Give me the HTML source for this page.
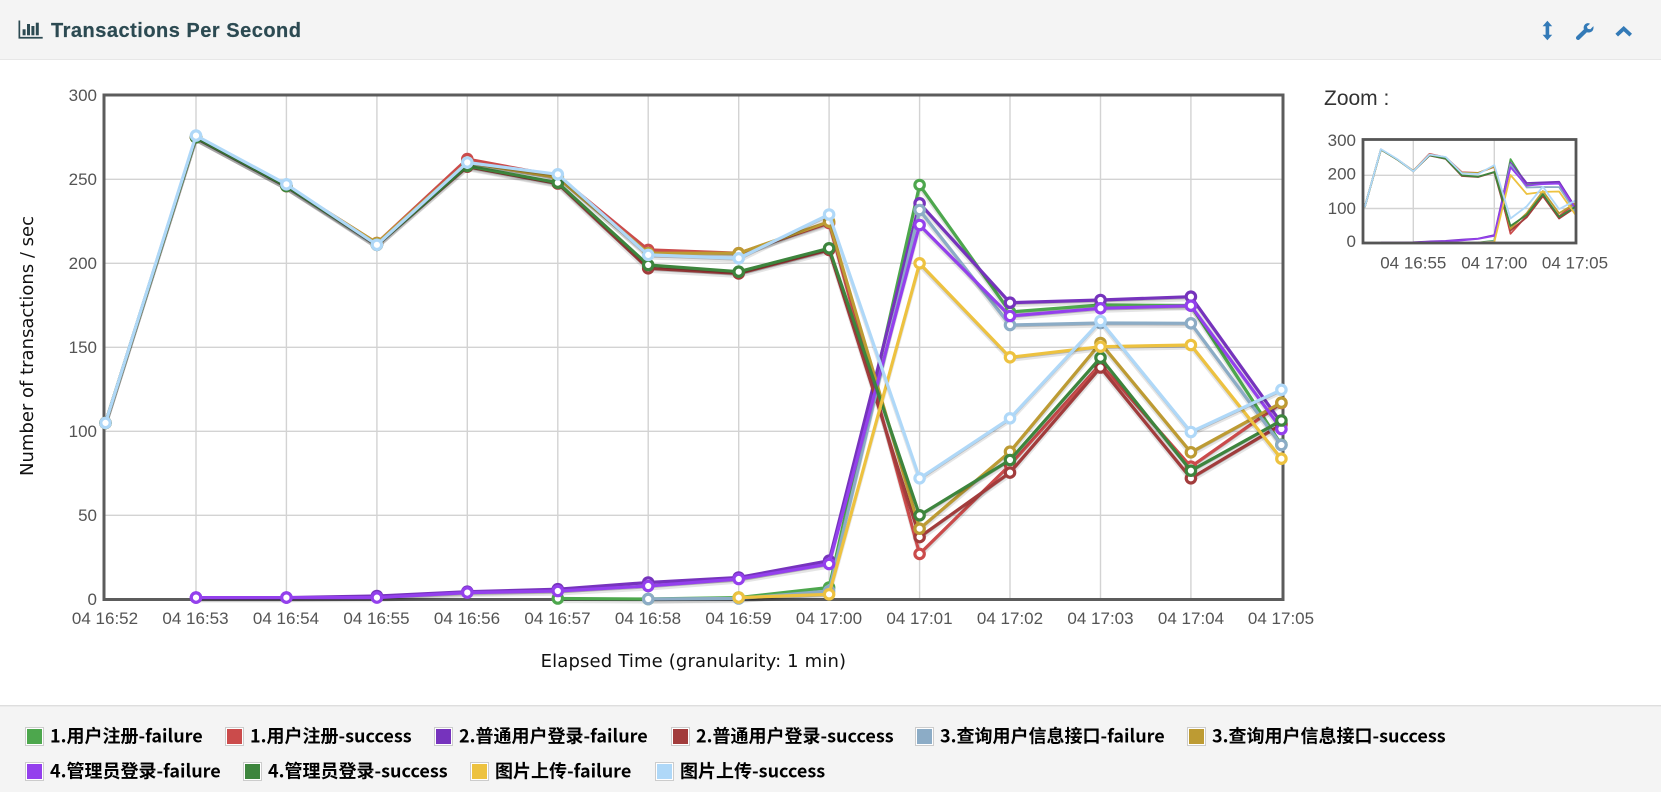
<!DOCTYPE html>
<html><head><meta charset="utf-8"><title>Transactions Per Second</title>
<style>
html,body{margin:0;padding:0;background:#fff;width:1661px;height:792px;overflow:hidden}
svg{position:absolute;left:0;top:0;display:block}
.t{font-family:"Liberation Sans",sans-serif;font-size:17px;fill:#545454}
.d{font-family:"DejaVu Sans",sans-serif;font-size:18px;fill:#111}
.l{font-family:"Noto Sans CJK SC",sans-serif;font-size:18px;font-weight:700;fill:#000}
.p{fill:none;stroke-linejoin:round;vector-effect:non-scaling-stroke}
.g{stroke:#d3d3d3;stroke-width:1.4;fill:none}
.m use{stroke-width:3.2}
.m use.s{stroke:rgba(0,0,0,.1);stroke-width:3.2}
.m use.r{stroke:rgba(0,0,0,.2);stroke-width:1.6}
.z use{stroke-width:1.8}
</style></head><body>
<svg width="1661" height="792" viewBox="0 0 1661 792" xmlns="http://www.w3.org/2000/svg">
<defs>
<polyline class="p" id="a1" points="557.8,598.5 648.2,599 738.7,597.6 829.1,587.5 919.6,185 1010,312 1100.5,305 1190.9,305.5 1281.4,444.7"/>
<polyline class="p" id="a2" points="105.5,422.9 196,137.3 286.4,186 376.9,243.1 467.3,159.1 557.8,176 648.2,249.9 738.7,253.2 829.1,223 919.6,553.9 1010,464.9 1100.5,364.1 1190.9,466.7 1281.4,403"/>
<polyline class="p" id="a3" points="196,597.6 286.4,597.6 376.9,596 467.3,591.7 557.8,589.2 648.2,582.5 738.7,577.5 829.1,560.7 919.6,203.3 1010,302.7 1100.5,300 1190.9,296.7 1281.4,423"/>
<polyline class="p" id="a4" points="105.5,422.9 196,137.3 286.4,186 376.9,244.8 467.3,166.7 557.8,183.5 648.2,268.3 738.7,273.4 829.1,249.9 919.6,537.1 1010,472.6 1100.5,367.5 1190.9,478.3 1281.4,424.6"/>
<polyline class="p" id="a5" points="648.2,599 738.7,598.5 829.1,591 919.6,210 1010,325 1100.5,323 1190.9,323.3 1281.4,445"/>
<polyline class="p" id="a6" points="105.5,422.9 196,137.3 286.4,186 376.9,243.1 467.3,162.5 557.8,177.6 648.2,253.2 738.7,253.2 829.1,221.7 919.6,528.7 1010,451.7 1100.5,343 1190.9,452.3 1281.4,402.7"/>
<polyline class="p" id="a7" points="196,597.6 286.4,597.6 376.9,597.6 467.3,592.6 557.8,591 648.2,586 738.7,579 829.1,564 919.6,225 1010,316 1100.5,308.3 1190.9,305.7 1281.4,429"/>
<polyline class="p" id="a8" points="105.5,422.9 196,137.3 286.4,186 376.9,244.8 467.3,165.9 557.8,182.7 648.2,265 738.7,271.7 829.1,248.3 919.6,515.3 1010,460 1100.5,357.7 1190.9,470.7 1281.4,420.5"/>
<polyline class="p" id="a9" points="738.7,597.6 829.1,594.3 919.6,263.3 1010,357.3 1100.5,346.7 1190.9,345 1281.4,458.7"/>
<polyline class="p" id="a10" points="105.5,422.9 196,135.6 286.4,184.3 376.9,244.8 467.3,162.5 557.8,174.3 648.2,254.9 738.7,258.3 829.1,214.5 919.6,478.3 1010,418.3 1100.5,321 1190.9,432 1281.4,389.8"/>
<marker id="c1" markerWidth="14" markerHeight="14" refX="7" refY="7" markerUnits="userSpaceOnUse"><circle cx="7" cy="7" r="4.7" fill="#fff" stroke="#4da74d" stroke-width="3.2"/></marker>
<marker id="c2" markerWidth="14" markerHeight="14" refX="7" refY="7" markerUnits="userSpaceOnUse"><circle cx="7" cy="7" r="4.7" fill="#fff" stroke="#cb4b4b" stroke-width="3.2"/></marker>
<marker id="c3" markerWidth="14" markerHeight="14" refX="7" refY="7" markerUnits="userSpaceOnUse"><circle cx="7" cy="7" r="4.7" fill="#fff" stroke="#7633bd" stroke-width="3.2"/></marker>
<marker id="c4" markerWidth="14" markerHeight="14" refX="7" refY="7" markerUnits="userSpaceOnUse"><circle cx="7" cy="7" r="4.7" fill="#fff" stroke="#a23c3c" stroke-width="3.2"/></marker>
<marker id="c5" markerWidth="14" markerHeight="14" refX="7" refY="7" markerUnits="userSpaceOnUse"><circle cx="7" cy="7" r="4.7" fill="#fff" stroke="#8cacc6" stroke-width="3.2"/></marker>
<marker id="c6" markerWidth="14" markerHeight="14" refX="7" refY="7" markerUnits="userSpaceOnUse"><circle cx="7" cy="7" r="4.7" fill="#fff" stroke="#bd9b33" stroke-width="3.2"/></marker>
<marker id="c7" markerWidth="14" markerHeight="14" refX="7" refY="7" markerUnits="userSpaceOnUse"><circle cx="7" cy="7" r="4.7" fill="#fff" stroke="#9440ed" stroke-width="3.2"/></marker>
<marker id="c8" markerWidth="14" markerHeight="14" refX="7" refY="7" markerUnits="userSpaceOnUse"><circle cx="7" cy="7" r="4.7" fill="#fff" stroke="#3d853d" stroke-width="3.2"/></marker>
<marker id="c9" markerWidth="14" markerHeight="14" refX="7" refY="7" markerUnits="userSpaceOnUse"><circle cx="7" cy="7" r="4.7" fill="#fff" stroke="#edc240" stroke-width="3.2"/></marker>
<marker id="c10" markerWidth="14" markerHeight="14" refX="7" refY="7" markerUnits="userSpaceOnUse"><circle cx="7" cy="7" r="4.7" fill="#fff" stroke="#afd8f8" stroke-width="3.2"/></marker>
</defs>

<!-- header -->
<rect x="0" y="0" width="1661" height="59" fill="#f4f4f4"/>
<rect x="0" y="59" width="1661" height="1" fill="#e7e7e7"/>
<g fill="#2c4a52">
<path d="M18.5 20.5h1.7v16.4H42.7v1.7H18.5z"/>
<rect x="22.6" y="29.3" width="3" height="6"/>
<rect x="27" y="24" width="3" height="11.3"/>
<rect x="31.4" y="26" width="3" height="9.3"/>
<rect x="35.8" y="22.7" width="3" height="12.6"/>
</g>
<text x="51" y="37" font-family="Liberation Sans,sans-serif" font-size="20px" font-weight="700" fill="#2c4a52" letter-spacing=".5" stroke="#2c4a52" stroke-width=".2">Transactions Per Second</text>
<g fill="#337ab7">
<path d="M1547.4 20.8l4.8 5.4h-3v8.6h3l-4.8 5.4-4.8-5.4h3v-8.6h-3z"/>
<path transform="translate(-4.2 -1.2)" d="M1594.4 24.8l-3.4 3 1 2.3 2.6.4 3-3.2c.4 2.6-.3 4.6-2.1 5.7-1.4.9-3 .9-4.4.4l-7.2 7c-1 1-2.4 1-3.2.1-.8-.9-.7-2.1.2-3l7.2-6.9c-.6-1.8-.2-3.7 1.1-5 1.3-1.3 3-1.7 4.6-.8z"/>
<path d="M1623.7 26l8.3 7.7-2.6 2.8-5.7-5.2-5.7 5.2-2.6-2.8z"/>
</g>

<!-- footer -->
<rect x="0" y="705" width="1661" height="87" fill="#f4f4f4"/>
<rect x="0" y="705" width="1661" height="1.4" fill="#dedede"/>

<!-- main grid -->
<g class="g">
<path d="M104 179.3H1283M104 263.3H1283M104 347.3H1283M104 431.3H1283M104 515.3H1283"/>
<path d="M196 95V599M286.4 95V599M376.9 95V599M467.3 95V599M557.8 95V599M648.2 95V599M738.7 95V599M829.1 95V599M919.6 95V599M1010 95V599M1100.5 95V599M1190.9 95V599"/>
</g>
<rect x="104" y="95" width="1179" height="504.5" fill="none" stroke="#5c5c5c" stroke-width="3"/>

<!-- main series -->
<g class="m">
<use href="#a1" class="s" transform="translate(0 3)"/><use href="#a1" class="r" transform="translate(0 1.6)"/><use href="#a1" stroke="#4da74d" marker-start="url(#c1)" marker-mid="url(#c1)" marker-end="url(#c1)"/>
<use href="#a2" class="s" transform="translate(0 3)"/><use href="#a2" class="r" transform="translate(0 1.6)"/><use href="#a2" stroke="#cb4b4b" marker-start="url(#c2)" marker-mid="url(#c2)" marker-end="url(#c2)"/>
<use href="#a3" class="s" transform="translate(0 3)"/><use href="#a3" class="r" transform="translate(0 1.6)"/><use href="#a3" stroke="#7633bd" marker-start="url(#c3)" marker-mid="url(#c3)" marker-end="url(#c3)"/>
<use href="#a4" class="s" transform="translate(0 3)"/><use href="#a4" class="r" transform="translate(0 1.6)"/><use href="#a4" stroke="#a23c3c" marker-start="url(#c4)" marker-mid="url(#c4)" marker-end="url(#c4)"/>
<use href="#a5" class="s" transform="translate(0 3)"/><use href="#a5" class="r" transform="translate(0 1.6)"/><use href="#a5" stroke="#8cacc6" marker-start="url(#c5)" marker-mid="url(#c5)" marker-end="url(#c5)"/>
<use href="#a6" class="s" transform="translate(0 3)"/><use href="#a6" class="r" transform="translate(0 1.6)"/><use href="#a6" stroke="#bd9b33" marker-start="url(#c6)" marker-mid="url(#c6)" marker-end="url(#c6)"/>
<use href="#a7" class="s" transform="translate(0 3)"/><use href="#a7" class="r" transform="translate(0 1.6)"/><use href="#a7" stroke="#9440ed" marker-start="url(#c7)" marker-mid="url(#c7)" marker-end="url(#c7)"/>
<use href="#a8" class="s" transform="translate(0 3)"/><use href="#a8" class="r" transform="translate(0 1.6)"/><use href="#a8" stroke="#3d853d" marker-start="url(#c8)" marker-mid="url(#c8)" marker-end="url(#c8)"/>
<use href="#a9" class="s" transform="translate(0 3)"/><use href="#a9" class="r" transform="translate(0 1.6)"/><use href="#a9" stroke="#edc240" marker-start="url(#c9)" marker-mid="url(#c9)" marker-end="url(#c9)"/>
<use href="#a10" class="s" transform="translate(0 3)"/><use href="#a10" class="r" transform="translate(0 1.6)"/><use href="#a10" stroke="#afd8f8" marker-start="url(#c10)" marker-mid="url(#c10)" marker-end="url(#c10)"/>
</g>

<!-- main tick labels -->
<g class="t" text-anchor="end">
<text x="97" y="101">300</text><text x="97" y="185">250</text><text x="97" y="269">200</text><text x="97" y="353">150</text><text x="97" y="437">100</text><text x="97" y="521">50</text><text x="97" y="605">0</text>
</g>
<g class="t" text-anchor="middle">
<text x="105" y="624">04 16:52</text><text x="195.5" y="624">04 16:53</text><text x="286" y="624">04 16:54</text><text x="376.5" y="624">04 16:55</text><text x="467" y="624">04 16:56</text><text x="557.5" y="624">04 16:57</text><text x="648" y="624">04 16:58</text><text x="738.5" y="624">04 16:59</text><text x="829" y="624">04 17:00</text><text x="919.5" y="624">04 17:01</text><text x="1010" y="624">04 17:02</text><text x="1100.5" y="624">04 17:03</text><text x="1191" y="624">04 17:04</text><text x="1281" y="624">04 17:05</text>
</g>
<text class="d" x="693.4" y="667" text-anchor="middle" letter-spacing=".15">Elapsed Time (granularity: 1 min)</text>
<text class="d" transform="translate(33 346) rotate(-90)" text-anchor="middle">Number of transactions / sec</text>

<!-- zoom overview -->
<text x="1324" y="105" font-family="Liberation Sans,sans-serif" font-size="21px" fill="#333">Zoom :</text>
<g class="g">
<path d="M1363 175.3H1576M1363 208.5H1576"/>
<path d="M1413.3 139V243M1494.3 139V243"/>
</g>
<g class="z" transform="translate(1364.7 243) scale(.1791 .2024) translate(-105.5 -599.3)">
<use href="#a1" stroke="#4da74d"/><use href="#a2" stroke="#cb4b4b"/><use href="#a3" stroke="#7633bd"/><use href="#a4" stroke="#a23c3c"/><use href="#a5" stroke="#8cacc6"/><use href="#a6" stroke="#bd9b33"/><use href="#a7" stroke="#9440ed"/><use href="#a8" stroke="#3d853d"/><use href="#a9" stroke="#edc240"/><use href="#a10" stroke="#afd8f8"/>
</g>
<rect x="1363" y="139.5" width="213" height="103.5" fill="none" stroke="#555" stroke-width="2.8"/>
<g class="t" text-anchor="end">
<text x="1356" y="146">300</text><text x="1356" y="179.5">200</text><text x="1356" y="214">100</text><text x="1356" y="247">0</text>
</g>
<g class="t" text-anchor="middle">
<text x="1413.3" y="268.5">04 16:55</text><text x="1494.3" y="268.5">04 17:00</text><text x="1575" y="268.5">04 17:05</text>
</g>

<!-- legend -->
<g fill="#fff" stroke="#ccc" stroke-width="1">
<rect x="25.5" y="727.5" width="18" height="18"/><rect x="225.5" y="727.5" width="18" height="18"/><rect x="434.5" y="727.5" width="18" height="18"/><rect x="671.5" y="727.5" width="18" height="18"/><rect x="915.5" y="727.5" width="18" height="18"/><rect x="1187.5" y="727.5" width="18" height="18"/>
<rect x="25.5" y="762.5" width="18" height="18"/><rect x="243.5" y="762.5" width="18" height="18"/><rect x="470.5" y="762.5" width="18" height="18"/><rect x="655.5" y="762.5" width="18" height="18"/>
</g>
<rect x="27" y="729" width="15" height="15" fill="#4da74d"/><rect x="227" y="729" width="15" height="15" fill="#cb4b4b"/><rect x="436" y="729" width="15" height="15" fill="#7633bd"/><rect x="673" y="729" width="15" height="15" fill="#a23c3c"/><rect x="917" y="729" width="15" height="15" fill="#8cacc6"/><rect x="1189" y="729" width="15" height="15" fill="#bd9b33"/>
<rect x="27" y="764" width="15" height="15" fill="#9440ed"/><rect x="245" y="764" width="15" height="15" fill="#3d853d"/><rect x="472" y="764" width="15" height="15" fill="#edc240"/><rect x="657" y="764" width="15" height="15" fill="#afd8f8"/>
<g class="l">
<text x="50" y="742.5">1.用户注册-failure</text><text x="250" y="742.5">1.用户注册-success</text><text x="459" y="742.5">2.普通用户登录-failure</text><text x="696" y="742.5">2.普通用户登录-success</text><text x="940" y="742.5">3.查询用户信息接口-failure</text><text x="1212" y="742.5">3.查询用户信息接口-success</text>
<text x="50" y="777.5">4.管理员登录-failure</text><text x="268" y="777.5">4.管理员登录-success</text><text x="495" y="777.5">图片上传-failure</text><text x="680" y="777.5">图片上传-success</text>
</g>
</svg>
</body></html>
